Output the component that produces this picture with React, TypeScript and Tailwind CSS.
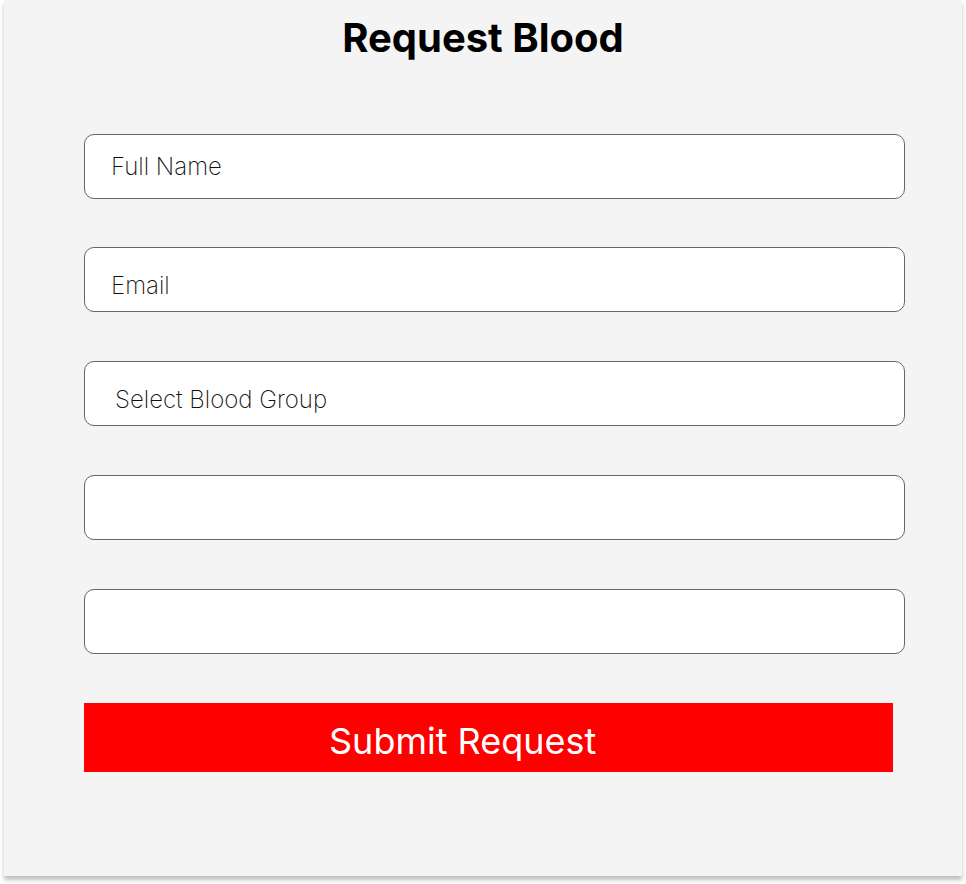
import React from "react";

const fieldClass =
    "h-[65px] w-full rounded-[10px] border border-[#666666] bg-white text-2xl font-extralight text-[#111111] outline-none placeholder:text-[#111111]";

const App = () => {
    return (
        <div className="min-h-screen bg-white font-['Inter',sans-serif]">
            <div className="ml-1 h-[876px] w-[958px] bg-[#f4f4f4] shadow-[0_4px_4px_rgba(0,0,0,0.25)]">
                <h1 className="pt-[14px] text-center text-[40px] font-bold leading-[48px] text-black">
                    Request Blood
                </h1>
                <form className="mt-[72px] flex flex-col pl-20 pr-[57px]">
                    <input className={`${fieldClass} pl-[26px]`} placeholder="Full Name" />
                    <input className={`${fieldClass} mt-12 pl-[26px] pt-3`} placeholder="Email" />
                    <input className={`${fieldClass} mt-[49px] pl-[30px] pt-3`} placeholder="Select Blood Group" />
                    <input className={`${fieldClass} mt-[49px]`} />
                    <input className={`${fieldClass} mt-[49px]`} />
                    <button
                        type="button"
                        className="mt-[49px] flex h-[69px] w-[809px] items-center bg-[#ff0000] pl-[245px] pt-[6px] text-[36px] font-normal text-white"
                    >
                        Submit Request
                    </button>
                </form>
            </div>
        </div>
    );
};

export default App;
